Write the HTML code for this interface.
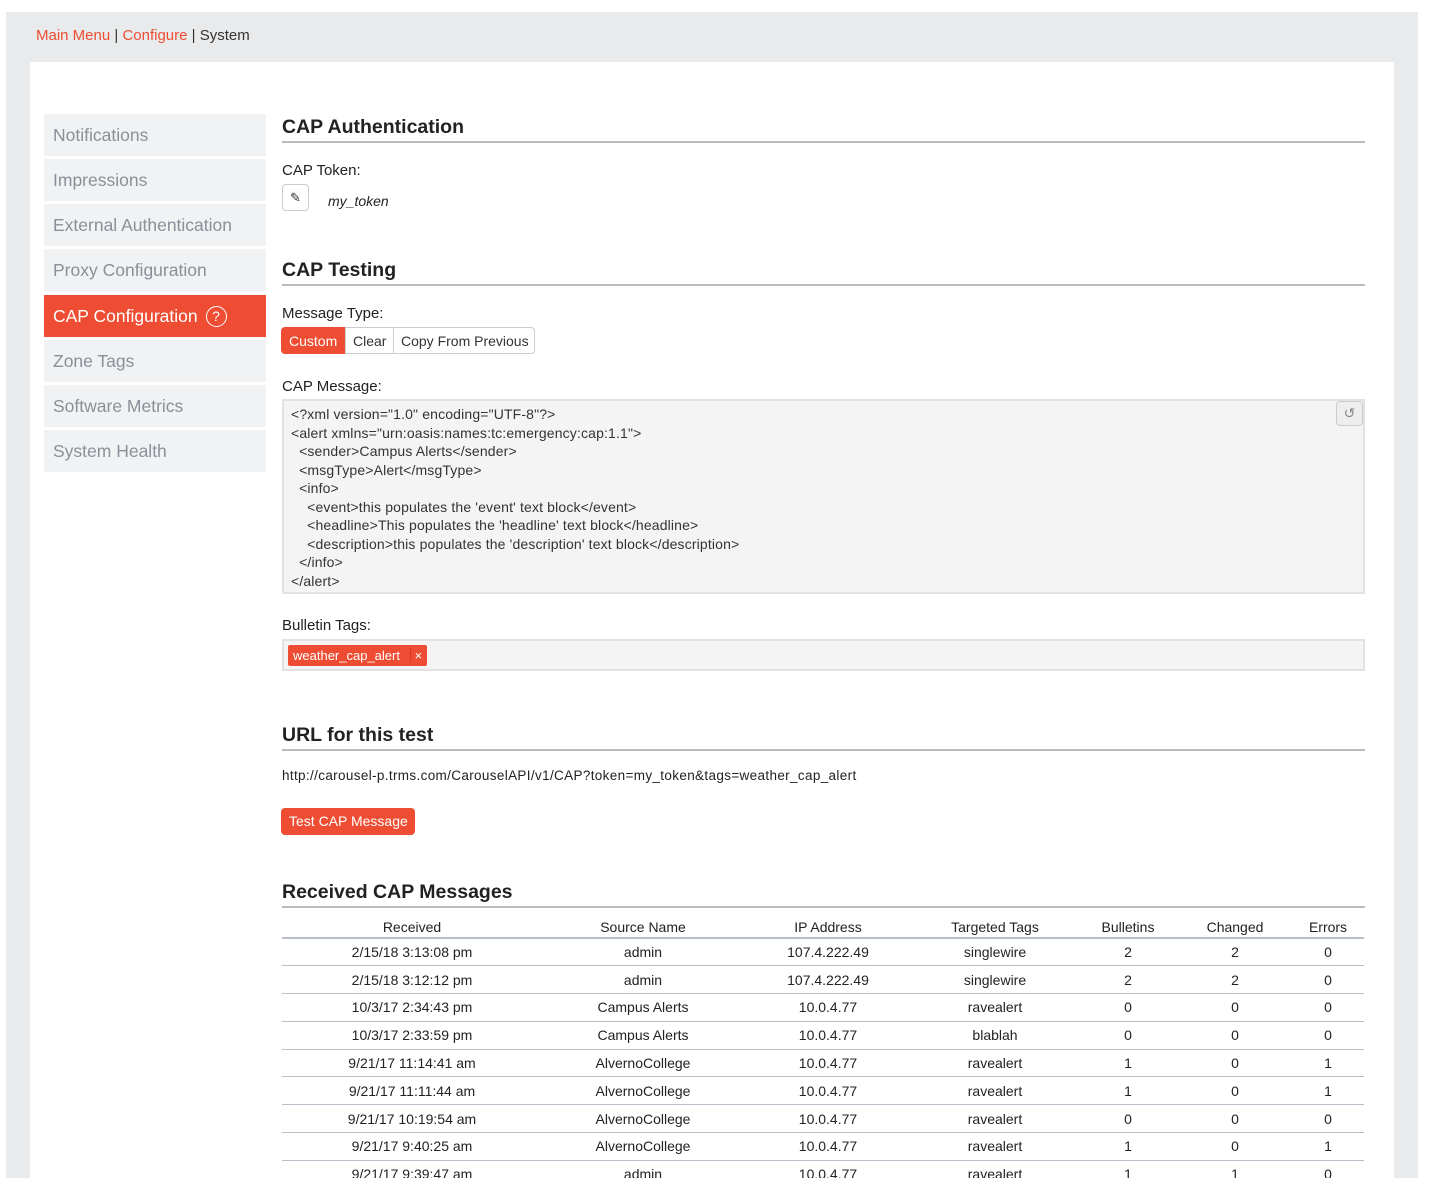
<!DOCTYPE html>
<html><head><style>
*{margin:0;padding:0;box-sizing:border-box}
body{width:1434px;height:1200px;background:#fff;font-family:"Liberation Sans",sans-serif;color:#333;position:relative;overflow:hidden}
.outer{position:absolute;left:6px;top:12px;width:1412px;height:1166px;background:#e9eaeb}
.crumb{position:absolute;left:36px;top:27px;font-size:15px;color:#333}
.crumb a{color:#ee4d33;text-decoration:none}
.panel{position:absolute;left:30px;top:62px;width:1364px;height:1116px;background:#fff}
.nav{position:absolute;left:44px;width:222px;height:42px;background:#f1f2f3;color:#8a9099;font-size:17.5px;padding:11px 0 0 9px;white-space:nowrap}
.nav.act{background:#ee4d33;color:#fff}
.q{display:inline-block;width:21px;height:21px;border:1.5px solid #fff;border-radius:50%;font-size:14px;text-align:center;line-height:18px;vertical-align:1px;margin-left:3px}
.h{position:absolute;left:282px;width:1083px;font-size:19.5px;font-weight:bold;color:#222;border-bottom:2px solid #bbb;padding-bottom:2px}
.lbl{position:absolute;left:282px;font-size:15px;color:#222}
.abs{position:absolute;white-space:nowrap}
.btn{position:absolute;top:327px;height:27px;border:1px solid #ccc;font-size:14px;padding:5px 7px;background:#fff;color:#333;white-space:nowrap}
.ta{position:absolute;left:282px;top:399px;width:1083px;height:195px;background:#f4f4f4;border:2px solid #e2e2e2;font-size:14px;line-height:18.5px;padding:4px 7px;color:#333;white-space:pre;letter-spacing:0.15px}
table{position:absolute;left:282px;top:916px;border-collapse:collapse;font-size:14px;color:#222}
td,th{text-align:center;font-weight:normal;height:27.8px;border-bottom:1px solid #b9bfc9;padding:0}
th{height:22px;border-bottom:2px solid #b9bfc9}
</style></head><body>
<div class="outer"></div>
<div class="crumb"><a>Main Menu</a> | <a>Configure</a> | System</div>
<div class="panel"></div>
<div class="nav" style="top:114px">Notifications</div>
<div class="nav" style="top:159px">Impressions</div>
<div class="nav" style="top:204px">External Authentication</div>
<div class="nav" style="top:249px">Proxy Configuration</div>
<div class="nav act" style="top:295px">CAP Configuration <span class="q">?</span></div>
<div class="nav" style="top:340px">Zone Tags</div>
<div class="nav" style="top:385px">Software Metrics</div>
<div class="nav" style="top:430px">System Health</div>

<div class="h" style="top:116px">CAP Authentication</div>
<div class="lbl" style="top:162px">CAP Token:</div>
<div class="abs" style="left:282px;top:184px;width:27px;height:27px;border:1px solid #ccc;border-radius:4px;text-align:center;font-size:13px;line-height:25px">✎</div>
<div class="abs" style="left:328px;top:193px;font-size:14px;font-style:italic;color:#222">my_token</div>

<div class="h" style="top:259px">CAP Testing</div>
<div class="lbl" style="top:305px">Message Type:</div>
<div class="btn" style="left:281px;width:65px;background:#ee4d33;border-color:#ee4d33;color:#fff;border-radius:4px 0 0 4px">Custom</div>
<div class="btn" style="left:345px;width:49px">Clear</div>
<div class="btn" style="left:393px;width:142px;border-radius:0 4px 4px 0">Copy From Previous</div>
<div class="lbl" style="top:378px">CAP Message:</div>
<div class="ta">&lt;?xml version="1.0" encoding="UTF-8"?&gt;
&lt;alert xmlns="urn:oasis:names:tc:emergency:cap:1.1"&gt;
  &lt;sender&gt;Campus Alerts&lt;/sender&gt;
  &lt;msgType&gt;Alert&lt;/msgType&gt;
  &lt;info&gt;
    &lt;event&gt;this populates the 'event' text block&lt;/event&gt;
    &lt;headline&gt;This populates the 'headline' text block&lt;/headline&gt;
    &lt;description&gt;this populates the 'description' text block&lt;/description&gt;
  &lt;/info&gt;
&lt;/alert&gt;</div>
<div class="abs" style="left:1336px;top:401px;width:27px;height:25px;border:1px solid #ccc;border-radius:4px;background:#eee;text-align:center;font-size:14px;color:#888;line-height:23px">↺</div>
<div class="lbl" style="top:617px">Bulletin Tags:</div>
<div class="abs" style="left:282px;top:639px;width:1083px;height:32px;background:#f4f4f4;border:2px solid #e2e2e2"></div>
<div class="abs" style="left:288px;top:645px;height:21px;background:#ee4d33;color:#fff;font-size:13px;padding:3px 5px;border-radius:2px">weather_cap_alert <span style="margin-left:6px;border-left:1px solid #d33;padding-left:4px">×</span></div>

<div class="h" style="top:724px">URL for this test</div>
<div class="abs" style="left:282px;top:768px;font-size:13.5px;color:#222;letter-spacing:0.35px">http://carousel-p.trms.com/CarouselAPI/v1/CAP?token=my_token&amp;tags=weather_cap_alert</div>
<div class="abs" style="left:281px;top:808px;width:134px;height:27px;background:#ee4d33;border-radius:4px;color:#fff;font-size:14px;padding:5px 8px">Test CAP Message</div>

<div class="h" style="top:881px">Received CAP Messages</div>
<table>
<tr><th style="width:260px">Received</th><th style="width:202px">Source Name</th><th style="width:168px">IP Address</th><th style="width:166px">Targeted Tags</th><th style="width:100px">Bulletins</th><th style="width:114px">Changed</th><th style="width:72px">Errors</th></tr>
<tr><td>2/15/18 3:13:08 pm</td><td>admin</td><td>107.4.222.49</td><td>singlewire</td><td>2</td><td>2</td><td>0</td></tr>
<tr><td>2/15/18 3:12:12 pm</td><td>admin</td><td>107.4.222.49</td><td>singlewire</td><td>2</td><td>2</td><td>0</td></tr>
<tr><td>10/3/17 2:34:43 pm</td><td>Campus Alerts</td><td>10.0.4.77</td><td>ravealert</td><td>0</td><td>0</td><td>0</td></tr>
<tr><td>10/3/17 2:33:59 pm</td><td>Campus Alerts</td><td>10.0.4.77</td><td>blablah</td><td>0</td><td>0</td><td>0</td></tr>
<tr><td>9/21/17 11:14:41 am</td><td>AlvernoCollege</td><td>10.0.4.77</td><td>ravealert</td><td>1</td><td>0</td><td>1</td></tr>
<tr><td>9/21/17 11:11:44 am</td><td>AlvernoCollege</td><td>10.0.4.77</td><td>ravealert</td><td>1</td><td>0</td><td>1</td></tr>
<tr><td>9/21/17 10:19:54 am</td><td>AlvernoCollege</td><td>10.0.4.77</td><td>ravealert</td><td>0</td><td>0</td><td>0</td></tr>
<tr><td>9/21/17 9:40:25 am</td><td>AlvernoCollege</td><td>10.0.4.77</td><td>ravealert</td><td>1</td><td>0</td><td>1</td></tr>
<tr><td>9/21/17 9:39:47 am</td><td>admin</td><td>10.0.4.77</td><td>ravealert</td><td>1</td><td>1</td><td>0</td></tr>
</table>
<div class="abs" style="left:0;top:1178px;width:1434px;height:22px;background:#fff"></div>
</body></html>
